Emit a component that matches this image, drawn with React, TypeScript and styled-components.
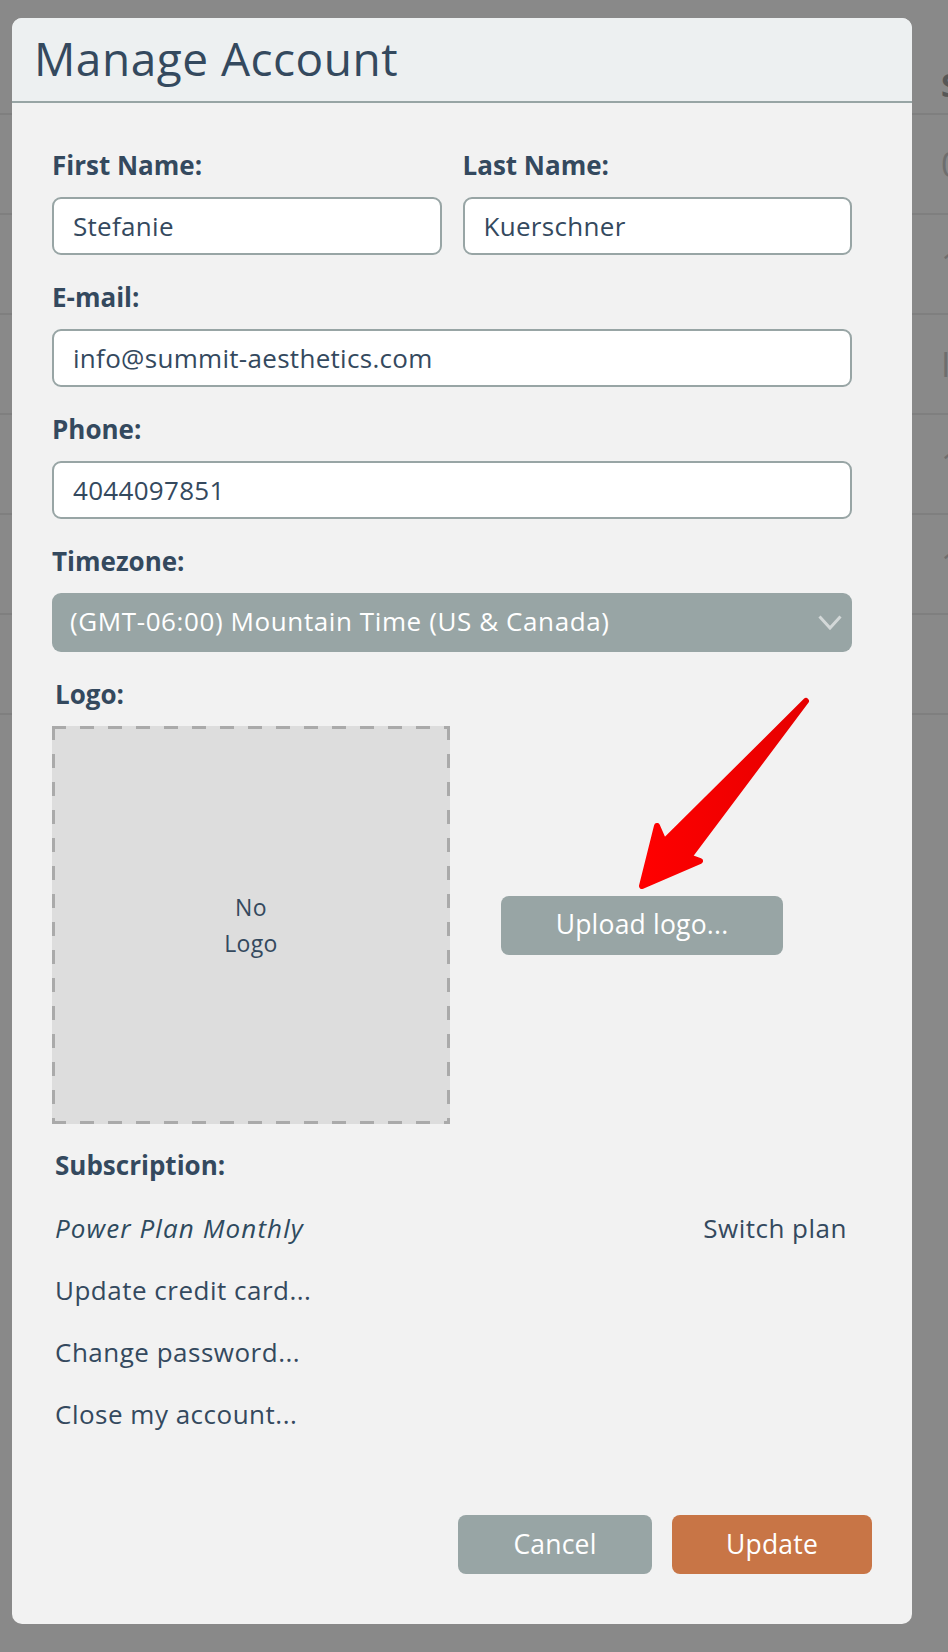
import React from 'react';
import styled, { createGlobalStyle } from 'styled-components';

const INK = '#34495e';
const SLATE = '#98a5a5';

const GlobalStyle = createGlobalStyle`
  * {
    box-sizing: border-box;
  }
  body {
    margin: 0;
    background: #898989;
    font-family: 'Open Sans', 'Liberation Sans', sans-serif;
  }
`;

const Page = styled.div`
  position: relative;
  width: 948px;
  height: 1652px;
  overflow: hidden;
  background: #898989;
`;

/* the list page that sits behind the dimmed backdrop */
const BackdropTable = styled.div`
  display: flex;
  flex-direction: column;
`;

interface BackdropRowProps {
  $header?: boolean;
}

const BackdropRow = styled.div<BackdropRowProps>`
  display: flex;
  align-items: center;
  height: ${(p) => (p.$header ? 115 : 100)}px;
  padding-left: 941px;
  padding-top: ${(p) => (p.$header ? 56 : 0)}px;
  border-bottom: 2px solid #7f7f7f;
  white-space: nowrap;
  font-size: ${(p) => (p.$header ? 32 : 34)}px;
  font-weight: ${(p) => (p.$header ? 700 : 400)};
  color: ${(p) => (p.$header ? '#575757' : '#6e6e6e')};
`;

const Modal = styled.div`
  position: absolute;
  left: 12px;
  top: 18px;
  width: 900px;
  background: #f2f2f2;
  border-radius: 10px;
  overflow: hidden;
`;

const ModalHeader = styled.header`
  height: 85px;
  padding: 12px 22px 0;
  background: #edf0f1;
  border-bottom: 2px solid ${SLATE};
`;

const Title = styled.h1`
  margin: 0;
  font-size: 46px;
  font-weight: 400;
  line-height: 56px;
  letter-spacing: 0.5px;
  color: ${INK};
`;

const ModalBody = styled.div`
  padding: 44px 60px 0 40px;
`;

const NameRow = styled.div`
  display: grid;
  grid-template-columns: 1fr 1fr;
  column-gap: 21px;
`;

const Field = styled.div`
  margin-bottom: 24px;
`;

interface LabelProps {
  $indent?: boolean;
}

const Label = styled.label<LabelProps>`
  display: block;
  height: 34px;
  margin-bottom: 16px;
  padding-top: 2px;
  padding-left: ${(p) => (p.$indent ? 3 : 0)}px;
  font-size: 26px;
  font-weight: 700;
  line-height: 32px;
  color: ${INK};
`;

const TextInput = styled.input`
  display: block;
  width: 100%;
  height: 58px;
  padding: 0 19px;
  background: #ffffff;
  border: 2px solid ${SLATE};
  border-radius: 9px;
  font-family: 'Open Sans', 'Liberation Sans', sans-serif;
  font-size: 26px;
  letter-spacing: 0.3px;
  color: ${INK};
  outline: none;
`;

const Select = styled.div`
  display: flex;
  align-items: center;
  justify-content: space-between;
  height: 59px;
  padding: 0 10px 4px 18px;
  background: ${SLATE};
  border-radius: 9px;
  font-size: 26px;
  letter-spacing: 0.6px;
  color: #ffffff;

  svg {
    margin-top: 4px;
  }
`;

const LogoRow = styled.div`
  display: flex;
  align-items: center;
  gap: 51px;
`;

const dash = '#aaaaaa';

const LogoBox = styled.div`
  display: flex;
  flex-direction: column;
  align-items: center;
  justify-content: center;
  width: 398px;
  height: 398px;
  background:
    linear-gradient(90deg, ${dash} 50%, transparent 50%) top left / 28px 3px repeat-x,
    linear-gradient(90deg, ${dash} 50%, transparent 50%) bottom left / 28px 3px repeat-x,
    linear-gradient(180deg, ${dash} 50%, transparent 50%) top left / 3px 28px repeat-y,
    linear-gradient(180deg, ${dash} 50%, transparent 50%) top right / 3px 28px repeat-y,
    #dddddd;
  font-size: 23px;
  line-height: 36px;
  letter-spacing: 0.3px;
  color: ${INK};
`;

interface ButtonProps {
  $tone: 'muted' | 'accent';
  $width: number;
}

const Button = styled.button<ButtonProps>`
  width: ${(p) => p.$width}px;
  height: 59px;
  padding: 0 0 2px;
  border: none;
  border-radius: 8px;
  background: ${(p) => (p.$tone === 'accent' ? '#c87546' : SLATE)};
  color: #ffffff;
  font-family: 'Open Sans', 'Liberation Sans', sans-serif;
  font-size: 26.5px;
  letter-spacing: 0.2px;
  cursor: pointer;
`;

const Subscription = styled.section`
  margin-top: 25px;
  padding: 0 5px 0 3px;
`;

const SubscriptionTitle = styled.h3`
  margin: 0;
  font-size: 26px;
  font-weight: 700;
  line-height: 32px;
  color: ${INK};
`;

const OptionList = styled.div`
  display: flex;
  flex-direction: column;
  gap: 30px;
  margin-top: 31px;
`;

const OptionRow = styled.div`
  display: flex;
  justify-content: space-between;
  font-size: 26px;
  line-height: 32px;
  letter-spacing: 0.5px;
  color: ${INK};
`;

const PlanName = styled.span`
  font-style: italic;
  letter-spacing: 1.1px;
  color: #2e4a5e;
`;

const ModalFooter = styled.footer`
  display: flex;
  justify-content: flex-end;
  gap: 20px;
  padding: 85px 40px 50px 0;
`;

const Annotation = styled.svg`
  position: absolute;
  left: 620px;
  top: 690px;
  width: 200px;
  height: 210px;
  pointer-events: none;
`;

const backdropRows = ['0', '1', 'I', '1', '1', ''];

const App = () => {
  return (
    <Page>
      <GlobalStyle />
      <BackdropTable>
        <BackdropRow $header>S</BackdropRow>
        {backdropRows.map((text, i) => (
          <BackdropRow key={i}>{text}</BackdropRow>
        ))}
      </BackdropTable>

      <Modal>
        <ModalHeader>
          <Title>Manage Account</Title>
        </ModalHeader>

        <ModalBody>
          <NameRow>
            <Field>
              <Label>First Name:</Label>
              <TextInput readOnly value="Stefanie" />
            </Field>
            <Field>
              <Label>Last Name:</Label>
              <TextInput readOnly value="Kuerschner" />
            </Field>
          </NameRow>

          <Field>
            <Label>E-mail:</Label>
            <TextInput readOnly value="info@summit-aesthetics.com" />
          </Field>

          <Field>
            <Label>Phone:</Label>
            <TextInput readOnly value="4044097851" />
          </Field>

          <Field>
            <Label>Timezone:</Label>
            <Select>
              <span>(GMT-06:00) Mountain Time (US &amp; Canada)</span>
              <svg width="24" height="15" viewBox="0 0 24 15">
                <polyline
                  points="1.5,1.5 12,13 22.5,1.5"
                  fill="none"
                  stroke="#d3d8d8"
                  strokeWidth="3"
                />
              </svg>
            </Select>
          </Field>

          <Label $indent>Logo:</Label>
          <LogoRow>
            <LogoBox>
              <span>No</span>
              <span>Logo</span>
            </LogoBox>
            <Button $tone="muted" $width={282}>
              Upload logo...
            </Button>
          </LogoRow>

          <Subscription>
            <SubscriptionTitle>Subscription:</SubscriptionTitle>
            <OptionList>
              <OptionRow>
                <PlanName>Power Plan Monthly</PlanName>
                <span>Switch plan</span>
              </OptionRow>
              <OptionRow>Update credit card...</OptionRow>
              <OptionRow>Change password...</OptionRow>
              <OptionRow>Close my account...</OptionRow>
            </OptionList>
          </Subscription>
        </ModalBody>

        <ModalFooter>
          <Button $tone="muted" $width={194}>
            Cancel
          </Button>
          <Button $tone="accent" $width={200}>
            Update
          </Button>
        </ModalFooter>
      </Modal>

      <Annotation viewBox="620 690 200 210">
        <defs>
          <linearGradient id="arrowShade" x1="0" y1="0" x2="1" y2="0">
            <stop offset="0" stopColor="#ff0000" />
            <stop offset="1" stopColor="#e60000" />
          </linearGradient>
        </defs>
        <path
          d="M 806 701 L 689 857 L 700 861 L 642 886 L 657 826 L 664 842 Z"
          fill="url(#arrowShade)"
          stroke="url(#arrowShade)"
          strokeWidth="6"
          strokeLinejoin="round"
        />
      </Annotation>
    </Page>
  );
};

export default App;
